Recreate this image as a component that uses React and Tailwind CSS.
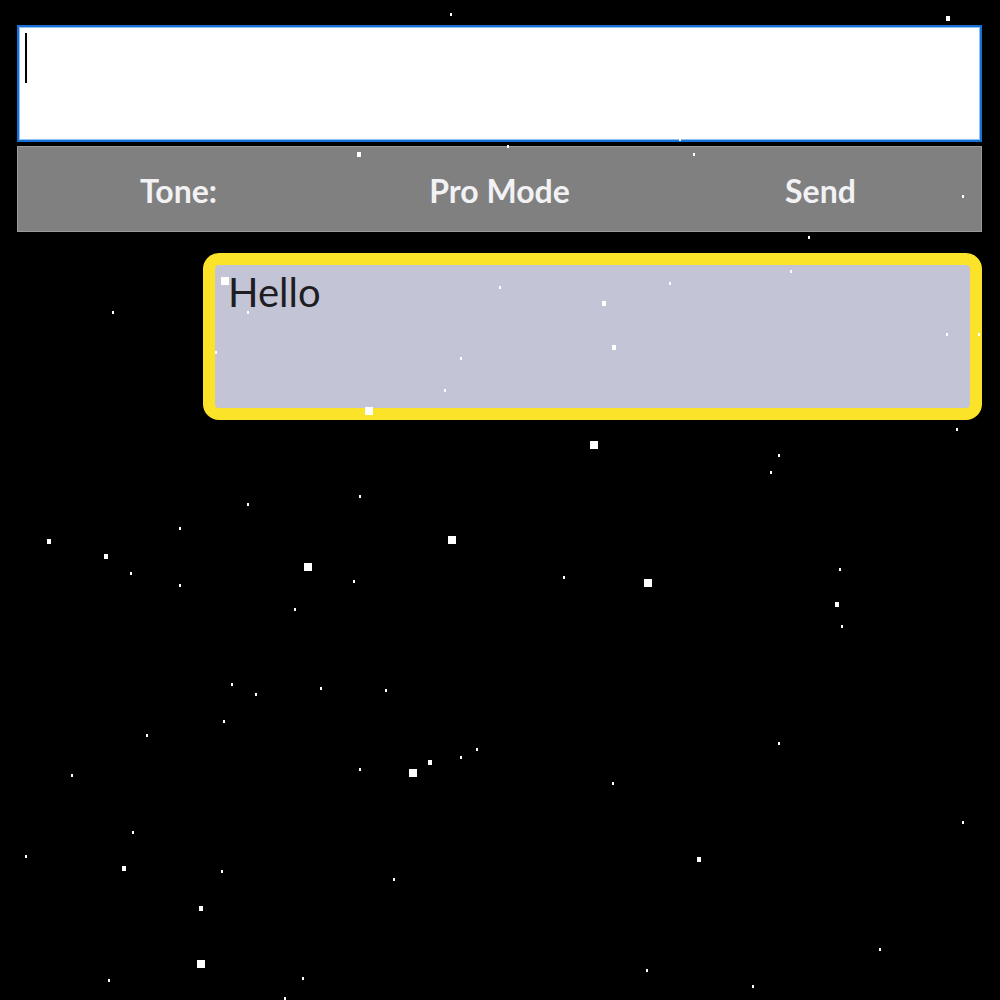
const stars = [
  // [x, y, size]  s = tiny, m = medium, b = big (centre points)
  [451, 14, 's'], [948, 18, 'm'], [359, 154, 'm'], [508, 146, 's'], [694, 154, 's'],
  [963, 196, 's'], [809, 237, 's'], [680, 139, 's'], [972, 137, 's'],
  [225, 281, 'b'], [248, 312, 's'], [216, 352, 's'], [461, 358, 's'], [445, 390, 's'],
  [369, 411, 'b'], [500, 287, 's'], [670, 283, 's'], [604, 303, 'm'], [614, 347, 'm'],
  [791, 271, 's'], [947, 334, 's'], [979, 334, 's'], [113, 312, 's'], [957, 429, 's'],
  [49, 541, 'm'], [106, 556, 'm'], [131, 573, 's'], [180, 528, 's'], [180, 585, 's'],
  [248, 504, 's'], [360, 496, 's'], [308, 567, 'b'], [354, 581, 's'], [295, 609, 's'],
  [452, 540, 'b'], [232, 684, 's'], [256, 694, 's'], [321, 688, 's'], [386, 690, 's'],
  [594, 445, 'b'], [779, 455, 's'], [771, 472, 's'], [564, 577, 's'], [648, 583, 'b'],
  [840, 569, 's'], [837, 604, 'm'], [842, 626, 's'],
  [224, 721, 's'], [147, 735, 's'], [72, 775, 's'], [360, 769, 's'], [413, 773, 'b'],
  [430, 762, 'm'], [461, 757, 's'], [477, 749, 's'], [133, 832, 's'], [26, 856, 's'],
  [124, 868, 'm'], [222, 871, 's'], [394, 879, 's'], [201, 908, 'm'], [201, 964, 'b'],
  [109, 980, 's'], [303, 978, 's'], [285, 998, 's'],
  [779, 743, 's'], [613, 783, 's'], [963, 822, 's'], [699, 859, 'm'], [880, 949, 's'],
  [647, 970, 's'], [753, 986, 's'],
];

const sizes = {
  s: { cls: 'w-[2px] h-[3px]', w: 2, h: 3 },
  m: { cls: 'w-[4px] h-[5px]', w: 4, h: 5 },
  b: { cls: 'w-[8px] h-[8px]', w: 8, h: 8 },
};

const Starfield = () => (
  <div className="absolute inset-0 pointer-events-none">
    {stars.map(([x, y, s], i) => (
      <span
        key={i}
        className={`absolute bg-white ${sizes[s].cls}`}
        style={{ left: x - sizes[s].w / 2, top: y - sizes[s].h / 2 }}
      />
    ))}
  </div>
);

const App = () => {
  const labels = ['Tone:', 'Pro Mode', 'Send'];

  return (
    <div
      className="relative min-h-screen bg-black pl-[17px] pr-[18px] pt-[25px]"
      style={{ fontFamily: 'Lato, "Noto Sans", sans-serif' }}
    >
      {/* Input */}
      <div className="h-[117px] bg-white border-2 border-[#1670d6] shadow-[inset_0_0_0_1px_#8fc3f5] px-[6px] pt-[6px]">
        <div className="w-[2px] h-[50px] bg-black" />
      </div>

      {/* Toolbar */}
      <div className="mt-[4px] h-[86px] bg-[#808080] border border-[#9a9a9a] grid grid-cols-3">
        {labels.map((label) => (
          <button
            key={label}
            className="flex items-center justify-center text-[32px] font-bold text-[#f2f2f4] pt-[4px]"
          >
            {label}
          </button>
        ))}
      </div>

      {/* Message */}
      <div className="flex justify-end mt-[21px]">
        <div className="w-[779px] h-[167px] rounded-[16px] border-[12px] border-[#fbe32a] bg-[#c3c4d6] pl-[13px] pt-[3px]">
          <p className="text-[40px] leading-[48px] text-[#1e1e22]">Hello</p>
        </div>
      </div>

      <Starfield />
    </div>
  );
};

export default App;
